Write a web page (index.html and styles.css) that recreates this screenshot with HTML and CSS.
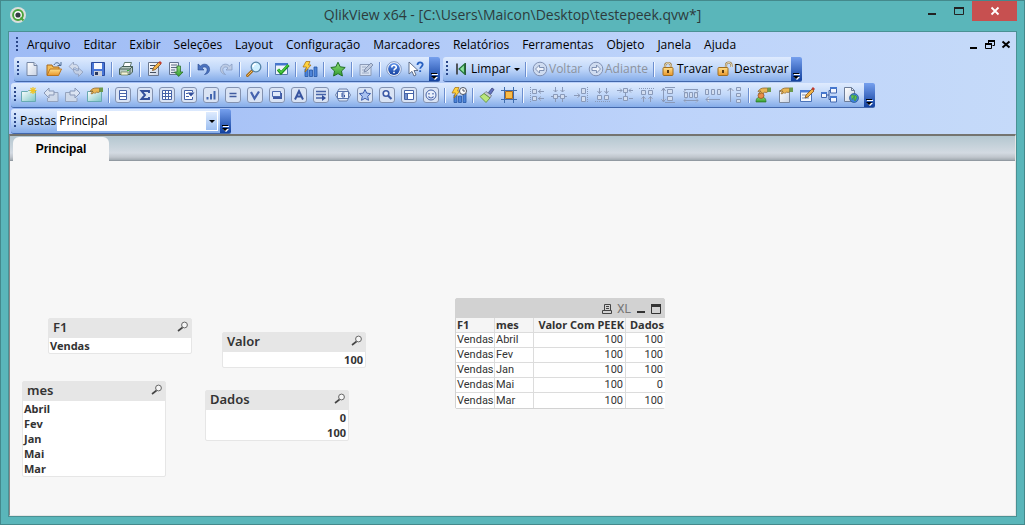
FILE: index.html
```html
<!DOCTYPE html>
<html lang="pt-BR">
<head>
<meta charset="utf-8">
<title>QlikView x64</title>
<link rel="stylesheet" href="styles.css">
</head>
<body>
<svg class="defs" aria-hidden="true">
  <defs>
    <linearGradient id="g-page" x1="0" y1="0" x2="1" y2="1"><stop offset="0" stop-color="#fff"/><stop offset="1" stop-color="#c9d3e4"/></linearGradient>
    <linearGradient id="g-folder" x1="0" y1="0" x2="0" y2="1"><stop offset="0" stop-color="#ffe08a"/><stop offset="1" stop-color="#e8952a"/></linearGradient>
    <linearGradient id="g-tile" x1="0" y1="0" x2="1" y2="1"><stop offset="0" stop-color="#fff"/><stop offset="1" stop-color="#7cc6c4"/></linearGradient>
    <linearGradient id="g-blue" x1="0" y1="0" x2="0" y2="1"><stop offset="0" stop-color="#5b8fe8"/><stop offset="1" stop-color="#123f9e"/></linearGradient>
    <linearGradient id="g-green" x1="0" y1="0" x2="0" y2="1"><stop offset="0" stop-color="#8fe07a"/><stop offset="1" stop-color="#2f9a2c"/></linearGradient>
  </defs>
  <symbol id="i-new" viewBox="0 0 16 16"><path d="M3 1.500h7l3 3v10H3z" fill="url(#g-page)" stroke="#7686a3"/><path d="M10 1.500v3h3" fill="#dde5f2" stroke="#7686a3"/></symbol>
  <symbol id="i-open" viewBox="0 0 16 16"><path d="M1 14V4h5l1 2h6v3" fill="#f3bd55" stroke="#a8691c"/><path d="M1 14.500 4 8h11.500l-3 6.500z" fill="url(#g-folder)" stroke="#b87420"/><path d="M8 4c1-3 5-3 6 0m1-3v3.500h-3.500" fill="none" stroke="#4d6a93"/></symbol>
  <symbol id="i-reload" viewBox="0 0 16 16"><path d="M10.500 8C11 4 8 3 5.500 3.500V1L1 5.500l4.500 4V7c2-.5 3 0 3 1z" fill="#d3dceb" stroke="#8d9cba" stroke-width=".8"/><path d="M5.500 8.500c0 4 2.500 5 5 4.500v2.500l4.500-4.500-4.500-4V9.500c-2 .5-3 0-3-1z" fill="#c3d0e6" stroke="#8d9cba" stroke-width=".8"/></symbol>
  <symbol id="i-save" viewBox="0 0 16 16"><path d="M1.500 1.500h13v13h-12l-1-1z" fill="#4775d6" stroke="#2a4a9e"/><path d="M4 2h8v6H4z" fill="#f6f8fd"/><path d="M4 10h8v5H4z" fill="#c9ced9"/><path d="M5 11h3v3H5z" fill="#27375f"/></symbol>
  <symbol id="i-print" viewBox="0 0 16 16"><path d="M5 6l1.500-4.500h7L12 6z" fill="#fff" stroke="#5d7771"/><path d="M1.500 8 4 5.500h10.500V11L12 13.500H1.500z" fill="#b8c9c2" stroke="#476159"/><path d="M1.500 8H12v5.500M12 8l2.500-2.500" fill="none" stroke="#476159"/><path d="M3 11h7v3H3z" fill="#f4f3d8" stroke="#6b7d57" stroke-width=".7"/><path d="M9 9h2v1H9z" fill="#2fb23a"/></symbol>
  <symbol id="i-edit" viewBox="0 0 16 16"><path d="M2.500 1.500h10v13h-10z" fill="url(#g-page)" stroke="#6b788f"/><path d="M4 4.500h5m-5 3h3m-3 4h6" stroke="#444f61" stroke-width="1.200"/><path d="m6.500 9.500 1-3L13 1l2 2-5.500 5.500z" fill="#f0b247" stroke="#7a4f1e" stroke-width=".8"/><path d="m12.500 1.500 2 2L16 2l-2-2z" fill="#c43b2c"/></symbol>
  <symbol id="i-runedit" viewBox="0 0 16 16"><path d="M1.500 1.500h9v12h-9z" fill="url(#g-page)" stroke="#647592"/><path d="M3 4h6M3 6.500h6M3 9h4m-4 2.500h4" stroke="#5c6b83"/><path d="M9 5h3.500v6H15l-4.300 4.500L6.500 11H9z" fill="url(#g-green)" stroke="#2c6e2a" stroke-width=".8"/></symbol>
  <symbol id="i-undo" viewBox="0 0 16 16"><path d="M2 3v6h6L6 7c2-2 6-1 5 3-.3 1.500-1.300 2.500-2.500 3.500C12 13 14 10.500 13.500 7.500 13 3.500 8 1.500 4.500 5z" fill="#4a72bf" stroke="#27488f" stroke-width=".6"/></symbol>
  <symbol id="i-redo" viewBox="0 0 16 16"><path d="M14 3v6H8l2-2c-2-2-6-1-5 3 .3 1.500 1.300 2.500 2.500 3.500C4 13 2 10.500 2.500 7.500 3 3.500 8 1.500 11.500 5z" fill="#bccbe4" stroke="#8196bd" stroke-width=".7"/></symbol>
  <symbol id="i-search" viewBox="0 0 16 16"><path d="m6.500 9.500-5 5" stroke="#a66b1c" stroke-width="3" stroke-linecap="round"/><path d="m6.500 9.500-5 5" stroke="#f0c26a" stroke-linecap="round"/><circle cx="10" cy="6" r="4.800" fill="#cfefff" stroke="#5583a7" stroke-width="1.300"/><path d="M7 6c0-2 1.500-3 3-3" fill="none" stroke="#fff" stroke-width="1.400"/></symbol>
  <symbol id="i-check" viewBox="0 0 16 16"><path d="M1.500 2.500h12v11h-12z" fill="#eef4fc" stroke="#5879ad"/><path d="M1 2h13v2.500H1z" fill="#4676cd"/><path d="m4 8.500 3 3.500 7.500-8" fill="none" stroke="#1c8b20" stroke-width="3"/><path d="m4 8.300 3 3.200L14 4" fill="none" stroke="#48cc3d" stroke-width="1.400"/></symbol>
  <symbol id="i-chart" viewBox="0 0 16 16"><path d="M3 8h3v7.500H3zm4.500 1h3v6.500h-3zM12 6h3v9.500h-3z" fill="#4c83d8" stroke="#2455a5" stroke-width=".8"/><path d="M4 .5h4L6.500 4H9l-6 7 1.500-5H1z" fill="#ffd23e" stroke="#a36d0c" stroke-width=".7"/></symbol>
  <symbol id="i-star" viewBox="0 0 16 16"><path d="m8 1.200 2.200 4.600 5 .7-3.700 3.500.9 5L8 12.600 3.600 15l.9-5L.8 6.500l5-.7z" fill="url(#g-green)" stroke="#227026"/></symbol>
  <symbol id="i-note" viewBox="0 0 16 16"><path d="M2 3.500h11v11H2z" fill="#d6e1f1" stroke="#8b9bb8"/><path d="M4 6h4m-4 3h3m-3 3h7" stroke="#9eacc5"/><path d="m6 11 1-3 6-6 2 2-6 6z" fill="#bdc9dd" stroke="#7183a5" stroke-width=".8"/></symbol>
  <symbol id="i-help" viewBox="0 0 16 16"><circle cx="8" cy="8" r="7.300" fill="#f4f8ff" stroke="#6f87b4" stroke-width=".8"/><circle cx="8" cy="8" r="5.900" fill="url(#g-blue)"/><path d="M5.800 6.500C5.800 3.500 10.300 3.700 10.300 6.200 10.300 7.800 8 8 8 9.500m0 1.300v1.500" fill="none" stroke="#fff" stroke-width="1.600"/></symbol>
  <symbol id="i-what" viewBox="0 0 16 16"><path d="M1 1v12l3-2.600L6 15l2-1-2-4.500h4z" fill="#fff" stroke="#53637f" stroke-width=".9"/><path d="M9.500 4c0-3.600 5.200-3.300 5.200-.4 0 2-2.500 2-2.500 4.200m0 1.500v1.800" fill="none" stroke="#265fc0" stroke-width="1.800"/></symbol>
  <symbol id="i-clear" viewBox="0 0 16 16"><path d="M4 2.500v11" stroke="#333" stroke-width="1.600"/><path d="M11.500 3v10L6 8z" fill="#8be39b" stroke="#24733a" stroke-width="1.200"/><path d="M12.500 2v12" stroke="#2b5a36"/></symbol>
  <symbol id="i-back" viewBox="0 0 16 16"><circle cx="8" cy="8" r="6.800" fill="#cfdcf0" stroke="#8091b3"/><path d="m3.500 8 4-4v2.500h4.500v3H7.500V12z" fill="#eef3fb" stroke="#7588ad" stroke-width=".9"/></symbol>
  <symbol id="i-fwd" viewBox="0 0 16 16"><circle cx="8" cy="8" r="6.800" fill="#cfdcf0" stroke="#8091b3"/><path d="m12.500 8-4-4v2.500H4v3h4.500V12z" fill="#eef3fb" stroke="#7588ad" stroke-width=".9"/></symbol>
  <symbol id="i-lock" viewBox="0 0 16 16"><path d="M5 8V5c0-4 6-4 6 0v3" fill="none" stroke="#9b8252" stroke-width="2.200"/><path d="M5 8V5c0-4 6-4 6 0v3" fill="none" stroke="#efe3c2"/><rect x="3" y="6.500" width="10" height="8" rx="1" fill="url(#g-folder)" stroke="#a06f22"/><path d="M7 9h2v3H7z" fill="#5a3a10"/></symbol>
  <symbol id="i-unlock" viewBox="0 0 16 16"><path d="M9 8V4.500c0-4 5.500-4 5.500 0V6" fill="none" stroke="#9b8252" stroke-width="2.200"/><path d="M9 8V4.500c0-4 5.500-4 5.500 0V6" fill="none" stroke="#efe3c2"/><rect x="1" y="6.500" width="10" height="8" rx="1" fill="url(#g-folder)" stroke="#a06f22"/><path d="M5 9h2v3H5z" fill="#5a3a10"/></symbol>

  <symbol id="i-sheet" viewBox="0 0 16 16"><path d="M.5 4.500h6l1-1h7v11H.5z" fill="url(#g-tile)" stroke="#68aab2"/><path d="M12 0v7M8.500 3.500h7M9.500 1l5 5m0-5-5 5" stroke="#f0c424" stroke-width="1.200"/></symbol>
  <symbol id="i-left" viewBox="0 0 16 16"><path d="M6 5.500h9v9H4.500V11" fill="#ced9ea" stroke="#94a3be"/><path d="m1 6 5-5v3h5v4H6v3z" fill="#dbe4f2" stroke="#8898b7"/></symbol>
  <symbol id="i-right" viewBox="0 0 16 16"><path d="M9 5.500H.5v9H12V11" fill="#ced9ea" stroke="#94a3be"/><path d="m15 6-5-5v3H5v4h5v3z" fill="#dbe4f2" stroke="#8898b7"/></symbol>
  <symbol id="hand" viewBox="0 0 16 16"><path d="M3 4.500C4.500 2 6.500 1 9 1h3.500v4L11 5.500 9.500 5 8 6.500 7 5.500 5 7 4 6.500 6 4z" fill="#e9b655" stroke="#855a1d" stroke-width=".7"/><path d="M12.500.5H16v4.500h-3.500z" fill="#6d9a4d"/></symbol>
  <symbol id="i-props" viewBox="0 0 16 16"><path d="M.5 4.500h14v10H.5z" fill="url(#g-tile)" stroke="#68aab2"/><use href="#hand"/></symbol>
  <symbol id="box" viewBox="0 0 16 16"><rect x=".5" y=".5" width="15" height="15" rx="2.500" fill="#d9e3f4" stroke="#8392b0"/></symbol>
  <symbol id="i-list" viewBox="0 0 16 16"><use href="#box"/><path d="M4.500 3.500h7v9h-7zm0 3h7m-7 3h7" fill="#fff" stroke="#4663a8"/></symbol>
  <symbol id="i-sum" viewBox="0 0 16 16"><use href="#box"/><path d="M12 6V4H4.500L8 8l-3.500 4H12v-2" fill="none" stroke="#334f9c" stroke-width="1.900"/></symbol>
  <symbol id="i-grid" viewBox="0 0 16 16"><use href="#box"/><path d="M3.500 3.500h9v9h-9zm0 3h9m-9 3h9m-6-6v9m3-9v9" fill="#fff" stroke="#4663a8"/></symbol>
  <symbol id="i-multi" viewBox="0 0 16 16"><use href="#box"/><path d="M11.500 10v2.500h-8v-9h8V5M5 6.500h2M5 9.500h3" fill="#fff" stroke="#4663a8"/><path d="M6.500 5.500h7L10 9.500z" fill="#334f9c"/></symbol>
  <symbol id="i-bars" viewBox="0 0 16 16"><use href="#box"/><path d="M4.500 12.500V10M8 12.500V7m3.500 5.500V4" stroke="#4366b0" stroke-width="2"/></symbol>
  <symbol id="i-eq" viewBox="0 0 16 16"><use href="#box"/><path d="M4.500 6.500h7m-7 3h7" stroke="#405ba0" stroke-width="1.500"/></symbol>
  <symbol id="i-sel" viewBox="0 0 16 16"><use href="#box"/><path d="m4 5 3.500 6.500L12 4.500" fill="none" stroke="#4663ae" stroke-width="2.200"/></symbol>
  <symbol id="i-button" viewBox="0 0 16 16"><use href="#box"/><path d="M4 6h9v6H4z" fill="#3e59a3"/><path d="M3.500 4.500h8v5h-8z" fill="#dfe9fa" stroke="#4b69b0"/></symbol>
  <symbol id="i-text" viewBox="0 0 16 16"><use href="#box"/><path d="M4 12.500 8 4l4 8.500M5.500 9.500h5" fill="none" stroke="#3955a0" stroke-width="2"/></symbol>
  <symbol id="i-line" viewBox="0 0 16 16"><use href="#box"/><path d="M3 4.500h10M3 7.500h10M3 11h7" stroke="#4763a7" stroke-width="1.400"/><path d="m9 8 4 3-4 3z" fill="#334f9c"/></symbol>
  <symbol id="i-gauge" viewBox="0 0 16 16"><path d="M4 2h8l3.500 6-3.500 6H4L.5 8z" fill="#dce6f6" stroke="#6f82aa"/><path d="M2.500 4.500h11v7h-11z" fill="#f0f5fd" stroke="#5671aa"/><path d="M9.500 6H7v4h2.500V8H7" fill="none" stroke="#3454a0"/></symbol>
  <symbol id="i-bstar" viewBox="0 0 16 16"><use href="#box"/><path d="m8 2.500 1.700 3.600 3.900.5-2.900 2.700.8 4L8 11.300l-3.500 2 .8-4-2.900-2.700 3.900-.5z" fill="#a9c2f1" stroke="#3f5fae"/></symbol>
  <symbol id="i-find" viewBox="0 0 16 16"><use href="#box"/><circle cx="7" cy="6.500" r="2.800" fill="#f1f5fd" stroke="#3d5aa6" stroke-width="1.600"/><path d="m9 8.500 3.500 3.500" stroke="#3d5aa6" stroke-width="2.200"/></symbol>
  <symbol id="i-panel" viewBox="0 0 16 16"><use href="#box"/><path d="M3.500 3.500h9v9h-9zm0 3h9m-6 0v6" fill="#fff" stroke="#4663a8"/><path d="M4 7h2v5H4z" fill="#7490cc"/></symbol>
  <symbol id="i-smile" viewBox="0 0 16 16"><use href="#box"/><circle cx="8" cy="8" r="5" fill="#e8effb" stroke="#4663a8"/><path d="M6 6v1.500M10 6v1.500M5.500 9.500c1 2 4 2 5 0" fill="none" stroke="#3d5aa6" stroke-width="1.200"/></symbol>
  <symbol id="i-timechart" viewBox="0 0 16 16"><use href="#i-chart"/><circle cx="12" cy="4" r="3.500" fill="#fff" stroke="#4c5361"/><path d="M12 2v2h2" fill="none" stroke="#4c5361"/></symbol>
  <symbol id="i-brush" viewBox="0 0 16 16"><path d="m9.500 5.500 3.500-4.500 2 1.500-3.500 5z" fill="#6272bd" stroke="#3f477d" stroke-width=".8"/><path d="m7 4.500 5.500 4-1.500 2.500-6-4.500z" fill="#c5cad3" stroke="#626a76" stroke-width=".7"/><path d="m5 6.500 6 4.500-4 4.500-6-6z" fill="#b9e67c" stroke="#5d8c35" stroke-width=".8"/></symbol>
  <symbol id="i-snap" viewBox="0 0 16 16"><path d="M3.500 0v16M12.500 0v16M0 3.500h16M0 12.500h16" stroke="#3f6dad"/><path d="M4.500 4.500h7v7h-7z" fill="#f8bd48" stroke="#b56f1b"/></symbol>
  <symbol id="a1" viewBox="0 0 16 16"><path d="M1.500 0v16" stroke-dasharray="1 1"/><path d="M3.500 2.500h4v4h-4zm0 7h4v4h-4zM9 4.500h6m-3-2-2.500 2 2.500 2M9 11.500h6m-3-2-2.500 2 2.500 2"/></symbol>
  <symbol id="a2" viewBox="0 0 16 16"><path d="M2.500 7.500h4v4h-4zm7 0h4v4h-4zM0 9.500h2m5 0h2m5 0h2M4.500 0v5m-2-2 2 2 2-2M11.500 0v5m-2-2 2 2 2-2M4.500 12v3m7-3v3"/></symbol>
  <symbol id="a3" viewBox="0 0 16 16"><path d="M14.500 0v16" stroke-dasharray="1 1"/><path d="M8.500 1.500h4v5h-4zm0 8h4v5h-4zM1 8.500h6m-2.500-2 2.500 2-2.500 2"/></symbol>
  <symbol id="a4" viewBox="0 0 16 16"><path d="M0 14.500h16" stroke-dasharray="1 1"/><path d="M2.500 8.500h4v4h-4zm7 0h4v4h-4zM4.500 1v5.500m-2-2.500 2 2.500 2-2.500M11.500 1v5.500m-2-2.500 2 2.500 2-2.500"/></symbol>
  <symbol id="a5" viewBox="0 0 16 16"><path d="M6.500 1.500h4v4h-4zm0 8h4v4h-4zM0 3.500h5m-2-2 2 2-2 2M16 3.500h-4m2-2-2 2 2 2M1 11.500h4m7 0h4M8.500 6v3"/></symbol>
  <symbol id="a6" viewBox="0 0 16 16"><path d="M0 1.500h16" stroke-dasharray="1 1"/><path d="M2.500 3.500h4v4h-4zm7 0h4v4h-4zM4.500 15V9.500m-2 2.500 2-2.500 2 2.500M11.500 15V9.500m-2 2.500 2-2.500 2 2.500"/></symbol>
  <symbol id="a7" viewBox="0 0 16 16"><path d="M6.500 2.500h5v4h-5zm0 7h5v4h-5zM4 .5h10M4 15.500h10M2.500 1v14m-2-11 2-3 2 3m-4 8 2 3 2-3"/></symbol>
  <symbol id="a8" viewBox="0 0 16 16"><path d="M1.500 5.500h3v5h-3zm5 0h3v5h-3zm5 0h3v5h-3zM1 2.500h14M1 13.500h14m-12-2-2 2 2 2m10-4 2 2-2 2m-10-13-2 2 2 2m10-4 2 2-2 2"/></symbol>
  <symbol id="a9" viewBox="0 0 16 16"><path d="M.5 2.500h3v5h-3zm6 0h3v5h-3zm6 0h3v5h-3zM1 12.500h14m-11-3-3 3 3 3"/></symbol>
  <symbol id="a10" viewBox="0 0 16 16"><path d="M9.500.5h4v3h-4zm0 6h4v3h-4zm0 6h4v3h-4zM3.500 1v14m-3-11 3-3 3 3"/></symbol>
  <symbol id="i-user" viewBox="0 0 16 16"><path d="M1 15c0-4 2-5 5-5s5 1 5 5z" fill="url(#g-green)" stroke="#2d762a" stroke-width=".7"/><circle cx="6" cy="8.500" r="3" fill="#e88e49" stroke="#8b491b" stroke-width=".7"/><use href="#hand"/></symbol>
  <symbol id="i-docprops" viewBox="0 0 16 16"><path d="M2.500 3.500h10v12h-10z" fill="url(#g-page)" stroke="#7b889e"/><use href="#hand"/></symbol>
  <symbol id="i-form" viewBox="0 0 16 16"><path d="M1.500 3.500h11v11h-11z" fill="#f4f7fd" stroke="#4a73b8"/><path d="M1 3h12v2.500H1z" fill="#4a7cd4"/><path d="M3 8h4m-4 3h7" stroke="#8193b4"/><path d="m6 11 1-3 6-6 2 2-6 6z" fill="#f0b247" stroke="#7a4f1e" stroke-width=".8"/><path d="m12.500 1.500 2 2L16 2l-2-2z" fill="#c43b2c"/></symbol>
  <symbol id="i-tables" viewBox="0 0 16 16"><path d="M5 8h3m0-4.500v9M8 3.500h2m-2 9h2" fill="none" stroke="#3d5d9c"/><path d="M.5 5.500h5v5h-5zm9-5h6v5.500h-6zm0 9h6V15h-6z" fill="#f5f8fe" stroke="#4167ae"/><path d="M0 5h6v2H0zm9-5h7v2H9zm0 9h7v2H9z" fill="#4778ce"/></symbol>
  <symbol id="i-web" viewBox="0 0 16 16"><path d="M1.500.5h7l3 3v11h-10z" fill="url(#g-page)" stroke="#6d7d98"/><path d="M8.500.5v3h3" fill="none" stroke="#6d7d98"/><circle cx="11" cy="11" r="4.500" fill="#3f83d8" stroke="#28558f" stroke-width=".7"/><path d="M8 9c2-2 3-1 3 .5S9 11 9 13M12 8l2 2-2 4-1-2z" fill="#5fc04c" stroke="#3e9a37" stroke-width=".7"/></symbol>
  <symbol id="i-over" viewBox="0 0 7 8"><path d="M1 2h6v1H1zm0 3h6L4 8z" fill="#fff"/><path d="M0 1h6v1H0zm0 3h6L3 7z" fill="#000"/></symbol>
  <symbol id="i-loupe" viewBox="0 0 12 12"><circle cx="7.500" cy="4" r="2.900" fill="#f5f5f5" stroke="#666"/><path d="M5.500 6.500 1 10" stroke="#444" stroke-width="1.600"/></symbol>
</svg>

<div class="window">
  <header class="titlebar">
    <svg class="logo" viewBox="0 0 16 16" aria-hidden="true"><circle cx="8" cy="8" r="8" fill="#dcdfdc"/><circle cx="8" cy="8" r="4.900" fill="#fff" stroke="#4ba33a" stroke-width="2"/><circle cx="8" cy="8" r="2.600" fill="#353b42"/><path d="m10.500 10.500 3 3" stroke="#4ba33a" stroke-width="2"/></svg>
    <h1 class="title">QlikView x64 - [C:\Users\Maicon\Desktop\testepeek.qvw*]</h1>
    <div class="winbtns">
      <button class="winbtn" aria-label="Minimizar"><svg width="10" height="10"><path d="M1 7h8v2H1z" fill="#222"/></svg></button>
      <button class="winbtn" aria-label="Maximizar"><svg width="10" height="10"><path d="M.5 1.500h9v7h-9z" fill="none" stroke="#222"/><path d="M0 1h10v2H0z" fill="#222"/></svg></button>
      <button class="winbtn close" aria-label="Fechar"><svg width="10" height="10"><path d="m1.500 1.500 7 7m0-7-7 7" stroke="#fff" stroke-width="1.800"/></svg></button>
    </div>
  </header>

  <div class="frame">
    <div class="bars">
      <nav class="menubar">
        <span class="grip"></span>
        <button>Arquivo</button><button>Editar</button><button>Exibir</button><button>Seleções</button><button>Layout</button><button>Configuração</button><button>Marcadores</button><button>Relatórios</button><button>Ferramentas</button><button>Objeto</button><button>Janela</button><button>Ajuda</button>
        <div class="mdi">
          <button aria-label="Minimizar documento"><svg width="10" height="10"><path d="M1 7h7v2H1z"/></svg></button>
          <button aria-label="Restaurar documento"><svg width="10" height="10"><path d="M3.500 3V.5h6v5H7.500M.5 4.500h6v4h-6z" fill="none" stroke="#000"/><path d="M3 0h7v2H3zM0 3h7v2H0z"/></svg></button>
          <button aria-label="Fechar documento"><svg width="10" height="10"><path d="m1.500 1.500 7 6m0-6-7 6" stroke="#000" stroke-width="2"/></svg></button>
        </div>
      </nav>

      <div class="dock first">
        <div class="toolbar" role="toolbar" aria-label="Padrão">
          <span class="grip"></span>
          <button class="tool" aria-label="Novo"><svg><use href="#i-new"/></svg></button>
          <button class="tool" aria-label="Abrir"><svg><use href="#i-open"/></svg></button>
          <button class="tool" aria-label="Atualizar"><svg><use href="#i-reload"/></svg></button>
          <button class="tool" aria-label="Salvar"><svg><use href="#i-save"/></svg></button>
          <span class="sep"></span>
          <button class="tool" aria-label="Imprimir"><svg><use href="#i-print"/></svg></button>
          <span class="sep"></span>
          <button class="tool" aria-label="Editar script"><svg><use href="#i-edit"/></svg></button>
          <button class="tool" aria-label="Recarregar"><svg><use href="#i-runedit"/></svg></button>
          <span class="sep"></span>
          <button class="tool" aria-label="Desfazer"><svg><use href="#i-undo"/></svg></button>
          <button class="tool" aria-label="Refazer"><svg><use href="#i-redo"/></svg></button>
          <span class="sep"></span>
          <button class="tool" aria-label="Pesquisar"><svg><use href="#i-search"/></svg></button>
          <span class="sep"></span>
          <button class="tool" aria-label="Seleções atuais"><svg><use href="#i-check"/></svg></button>
          <span class="sep"></span>
          <button class="tool" aria-label="Gráfico rápido"><svg><use href="#i-chart"/></svg></button>
          <span class="sep"></span>
          <button class="tool" aria-label="Favorito"><svg><use href="#i-star"/></svg></button>
          <span class="sep"></span>
          <button class="tool" aria-label="Notas"><svg><use href="#i-note"/></svg></button>
          <span class="sep"></span>
          <button class="tool" aria-label="Ajuda"><svg><use href="#i-help"/></svg></button>
          <button class="tool" aria-label="O que é isto"><svg><use href="#i-what"/></svg></button>
          <button class="over" aria-label="Mais opções"><svg><use href="#i-over"/></svg></button>
        </div>
        <div class="toolbar" role="toolbar" aria-label="Navegação">
          <span class="grip"></span>
          <button class="tool wide clear"><svg><use href="#i-clear"/></svg>Limpar<i class="caret"></i></button>
          <span class="sep"></span>
          <button class="tool wide back" disabled><svg><use href="#i-back"/></svg>Voltar</button>
          <button class="tool wide fwd" disabled><svg><use href="#i-fwd"/></svg>Adiante</button>
          <span class="sep"></span>
          <button class="tool wide lock"><svg><use href="#i-lock"/></svg>Travar</button>
          <button class="tool wide unlock"><svg><use href="#i-unlock"/></svg>Destravar</button>
          <button class="over" aria-label="Mais opções"><svg><use href="#i-over"/></svg></button>
        </div>
      </div>

      <div class="dock">
        <div class="toolbar" role="toolbar" aria-label="Design">
          <span class="grip"></span>
          <button class="tool" aria-label="Nova pasta"><svg><use href="#i-sheet"/></svg></button>
          <button class="tool" aria-label="Mover à esquerda"><svg><use href="#i-left"/></svg></button>
          <button class="tool" aria-label="Mover à direita"><svg><use href="#i-right"/></svg></button>
          <button class="tool" aria-label="Propriedades da pasta"><svg><use href="#i-props"/></svg></button>
          <span class="sep"></span>
          <button class="tool" aria-label="Lista"><svg><use href="#i-list"/></svg></button>
          <button class="tool" aria-label="Estatística"><svg><use href="#i-sum"/></svg></button>
          <button class="tool" aria-label="Tabela"><svg><use href="#i-grid"/></svg></button>
          <button class="tool" aria-label="Seleção múltipla"><svg><use href="#i-multi"/></svg></button>
          <button class="tool" aria-label="Gráfico"><svg><use href="#i-bars"/></svg></button>
          <button class="tool" aria-label="Caixa de entrada"><svg><use href="#i-eq"/></svg></button>
          <button class="tool" aria-label="Caixa de seleções"><svg><use href="#i-sel"/></svg></button>
          <button class="tool" aria-label="Botão"><svg><use href="#i-button"/></svg></button>
          <button class="tool" aria-label="Texto"><svg><use href="#i-text"/></svg></button>
          <button class="tool" aria-label="Linha"><svg><use href="#i-line"/></svg></button>
          <button class="tool" aria-label="Calendário"><svg><use href="#i-gauge"/></svg></button>
          <button class="tool" aria-label="Marcador"><svg><use href="#i-bstar"/></svg></button>
          <button class="tool" aria-label="Objeto de pesquisa"><svg><use href="#i-find"/></svg></button>
          <button class="tool" aria-label="Contêiner"><svg><use href="#i-panel"/></svg></button>
          <button class="tool" aria-label="Objeto personalizado"><svg><use href="#i-smile"/></svg></button>
          <span class="sep"></span>
          <button class="tool" aria-label="Gráfico de tempo"><svg><use href="#i-timechart"/></svg></button>
          <span class="sep"></span>
          <button class="tool" aria-label="Pincel de formato"><svg><use href="#i-brush"/></svg></button>
          <button class="tool" aria-label="Grade"><svg><use href="#i-snap"/></svg></button>
          <span class="sep"></span>
          <button class="tool align" disabled aria-label="Alinhar à esquerda"><svg><use href="#a1"/></svg></button>
          <button class="tool align" disabled aria-label="Centralizar na vertical"><svg><use href="#a2"/></svg></button>
          <button class="tool align" disabled aria-label="Alinhar à direita"><svg><use href="#a3"/></svg></button>
          <button class="tool align" disabled aria-label="Alinhar abaixo"><svg><use href="#a4"/></svg></button>
          <button class="tool align" disabled aria-label="Centralizar na horizontal"><svg><use href="#a5"/></svg></button>
          <button class="tool align" disabled aria-label="Alinhar acima"><svg><use href="#a6"/></svg></button>
          <button class="tool align" disabled aria-label="Espaçar na vertical"><svg><use href="#a7"/></svg></button>
          <button class="tool align" disabled aria-label="Espaçar na horizontal"><svg><use href="#a8"/></svg></button>
          <button class="tool align" disabled aria-label="Ajustar à esquerda"><svg><use href="#a9"/></svg></button>
          <button class="tool align" disabled aria-label="Ajustar acima"><svg><use href="#a10"/></svg></button>
          <span class="sep"></span>
          <button class="tool" aria-label="Preferências do usuário"><svg><use href="#i-user"/></svg></button>
          <button class="tool" aria-label="Propriedades do documento"><svg><use href="#i-docprops"/></svg></button>
          <button class="tool" aria-label="Editar módulo"><svg><use href="#i-form"/></svg></button>
          <button class="tool" aria-label="Visualizador de tabelas"><svg><use href="#i-tables"/></svg></button>
          <button class="tool" aria-label="Modo WebView"><svg><use href="#i-web"/></svg></button>
          <button class="over" aria-label="Mais opções"><svg><use href="#i-over"/></svg></button>
        </div>
      </div>

      <div class="dock">
        <div class="toolbar" role="toolbar" aria-label="Pastas">
          <span class="grip"></span>
          <label class="picklabel" for="pasta">Pastas</label>
          <span class="pick"><select id="pasta"><option>Principal</option></select><span class="pickbtn"><i class="caret"></i></span></span>
          <button class="over" aria-label="Mais opções"><svg><use href="#i-over"/></svg></button>
        </div>
      </div>
    </div>

    <main class="document">
      <div class="tabs" role="tablist"><button class="tab" role="tab" aria-selected="true">Principal</button></div>
      <div class="sheet">
        <section class="listbox f1"><h2>F1<svg><use href="#i-loupe"/></svg></h2><ul><li>Vendas</li></ul></section>
        <section class="listbox valor"><h2>Valor<svg><use href="#i-loupe"/></svg></h2><ul class="num"><li>100</li></ul></section>
        <section class="listbox mes"><h2>mes<svg><use href="#i-loupe"/></svg></h2><ul><li>Abril</li><li>Fev</li><li>Jan</li><li>Mai</li><li>Mar</li></ul></section>
        <section class="listbox dados"><h2>Dados<svg><use href="#i-loupe"/></svg></h2><ul class="num"><li>0</li><li>100</li></ul></section>

        <section class="chart">
          <div class="chartbar">
            <button aria-label="Imprimir"><svg width="10" height="10"><path d="M2.500 7V.5h6V7M.5 6.500h9v3h-9zM4 2.500h3M4 4.500h3" fill="none" stroke="#444"/></svg></button>
            <button class="xl">XL</button>
            <button aria-label="Minimizar"><svg width="10" height="10"><path d="M1 7h8v2H1z" fill="#333"/></svg></button>
            <button aria-label="Maximizar"><svg width="10" height="10"><path d="M.5.5h9v9h-9z" fill="none" stroke="#333"/><path d="M0 0h10v3H0z" fill="#333"/></svg></button>
          </div>
          <table>
            <colgroup><col class="c1"><col class="c1"><col class="c3"><col class="c1"></colgroup>
            <thead><tr><th>F1</th><th>mes</th><th class="n">Valor Com PEEK</th><th class="n">Dados</th></tr></thead>
            <tbody>
              <tr><td>Vendas</td><td>Abril</td><td class="n">100</td><td class="n">100</td></tr>
              <tr><td>Vendas</td><td>Fev</td><td class="n">100</td><td class="n">100</td></tr>
              <tr><td>Vendas</td><td>Jan</td><td class="n">100</td><td class="n">100</td></tr>
              <tr><td>Vendas</td><td>Mai</td><td class="n">100</td><td class="n">0</td></tr>
              <tr><td>Vendas</td><td>Mar</td><td class="n">100</td><td class="n">100</td></tr>
            </tbody>
          </table>
        </section>
      </div>
    </main>
  </div>
</div>
</body>
</html>
```
FILE: styles.css
```css
* { box-sizing: border-box; }
body { margin: 0; font: 12px/16px "Open Sans", "Noto Sans", sans-serif; color: #000; }
button { margin: 0; padding: 0; border: 0; background: none; font: inherit; color: inherit; }
.defs { position: absolute; width: 0; height: 0; }

.window { min-height: 100vh; display: flex; flex-direction: column; padding: 0 7px 7px; background: #5ab6ba; border: 1px solid #44898c; }

.titlebar { display: grid; grid-template-columns: 1fr auto 1fr; height: 30px; align-items: start; }
.logo { width: 16px; height: 16px; margin: 6px 0 0 2px; }
.title { margin: 2px 0 0; font-size: 14px; line-height: 24px; font-weight: 400; color: #2d3b3c; }
.winbtns { display: flex; justify-content: flex-end; }
.winbtn { width: 27px; height: 20px; display: grid; place-items: center; }
.winbtn.close { width: 45px; background: #c75050; }

.frame { flex: 1; display: flex; flex-direction: column; border: 1px solid #4a9194; }
.bars { background: linear-gradient(90deg, #9ebbf5 0%, #bdd3fa 65%, #c5daf9 100%); }

.menubar { display: flex; align-items: center; gap: 1px; height: 25px; padding-left: 4px; }
.menubar > button { padding: 0 6px; white-space: nowrap; }
.mdi { display: flex; gap: 6px; margin-left: auto; padding-right: 5px; }
.mdi svg { display: block; }

.grip { flex: none; width: 7px; height: 16px; background: linear-gradient(#2a4688 2px, transparent 2px) 3px 0 / 2px 4px repeat-y; }

.dock { display: flex; gap: 3px; padding-left: 2px; }
.dock + .dock { margin-top: 1px; }
.dock.first { padding-left: 5px; }
.toolbar { display: flex; align-items: center; height: 25px; border-bottom: 1px solid #4267ab; border-radius: 3px 2px 2px 3px; background: linear-gradient(#dfebfe, #c0d7f9 50%, #86ade9); overflow: hidden; }
.tool { flex: none; width: 22px; height: 22px; display: flex; align-items: center; padding-left: 3px; white-space: nowrap; }
.tool svg { flex: none; width: 16px; height: 16px; }
.tool:disabled { color: #8c929c; }
.wide svg { margin-right: 1px; }
.clear { width: 73px; }
.clear svg { margin-right: 2px; }
.back { width: 56px; }
.fwd { width: 66px; }
.lock { width: 57px; }
.unlock { width: 75px; }
.align svg { fill: #d3def0; stroke: #8a9ab9; }
.sep { flex: none; width: 6px; height: 15px; background: linear-gradient(90deg, #6c8fd0 50%, #f2f7ff 50%) center / 2px 100% no-repeat; }
.caret { width: 0; height: 0; border: 3px solid transparent; border-top-color: #000; border-bottom: 0; }
.tool .caret { margin-left: 4px; }
.over { flex: none; align-self: stretch; width: 11px; margin-left: 2px; display: flex; align-items: flex-end; justify-content: center; padding-bottom: 1px; background: linear-gradient(#76a0ee, #12419f); }
.over svg { width: 7px; height: 8px; }

.picklabel { padding: 0 1px 0 2px; }
.pick { display: grid; grid-template-columns: 149px 12px; height: 20px; background: #fff; }
.pick select { grid-area: 1 / 1 / 2 / 3; appearance: none; border: 0; padding: 0 2px; background: none; font: inherit; color: inherit; }
.pickbtn { grid-area: 1 / 2; margin: 1px 1px 1px 0; display: grid; place-items: center; background: linear-gradient(#deebfe, #9dbff1); pointer-events: none; }

.document { flex: 1; display: flex; flex-direction: column; border: 1px solid #8a8a8a; border-top: 2px solid #74746f; border-right-color: #e6e6e6; border-bottom-color: #e6e6e6; background: #f7f7f7; }
.tabs { display: flex; align-items: flex-end; height: 25px; padding-left: 3px; border-bottom: 1px solid #929aa2; background: linear-gradient(#b4c7d0, #d3dae2 70%, #c0c6cd 88%, #a3abb2); }
.tab { width: 96px; height: 24px; margin-bottom: -1px; border-radius: 6px 6px 0 0; background: #f7f7f7; font: bold 12px/23px "Liberation Sans", sans-serif; }

.sheet { flex: 1; position: relative; font: 11px/15px "Noto Sans", sans-serif; color: #333; }
.listbox { position: absolute; width: 144px; border: 1px solid #e6e6e6; border-radius: 2px; background: #fff; }
.listbox h2 { display: flex; justify-content: space-between; height: 19px; margin: 0; padding: 0 2px 0 4px; background: #e6e6e6; font-size: 13px; line-height: 17px; font-weight: 600; }
.listbox svg { width: 12px; height: 12px; margin-top: 2px; }
.listbox ul { margin: 0; padding: 0 2px 0 1px; list-style: none; font-weight: 700; }
.listbox .num { text-align: right; }
.f1 { left: 38px; top: 157px; }
.valor { left: 212px; top: 171px; }
.mes { left: 12px; top: 220px; }
.dados { left: 195px; top: 229px; }

.chart { position: absolute; left: 445px; top: 137px; width: 210px; border: 1px solid #d2d2d2; border-radius: 2px; background: #d2d2d2; }
.chartbar { display: flex; align-items: center; justify-content: flex-end; gap: 5px; height: 19px; padding-right: 3px; }
.chartbar svg { display: block; }
.chartbar .xl { font: 12px/16px "Roboto", sans-serif; color: #777; }
.chart table { width: 100%; table-layout: fixed; border-collapse: separate; border-spacing: 0; background: #fff; }
.c1 { width: 39px; }
.c3 { width: 92px; }
.chart th, .chart td { height: 15px; padding: 0 1px; border-right: 1px solid #dcdcdc; border-bottom: 1px solid #dcdcdc; line-height: 14px; text-align: left; white-space: nowrap; }
.chart th { background: #f5f5f5; }
.chart td { font-family: "Roboto", sans-serif; }
.chart td.n { padding-right: 2px; }
.chart .n { text-align: right; }
.chart tr > :last-child { border-right: 0; }
.chart tbody tr:last-child > td { border-bottom: 0; }
```
